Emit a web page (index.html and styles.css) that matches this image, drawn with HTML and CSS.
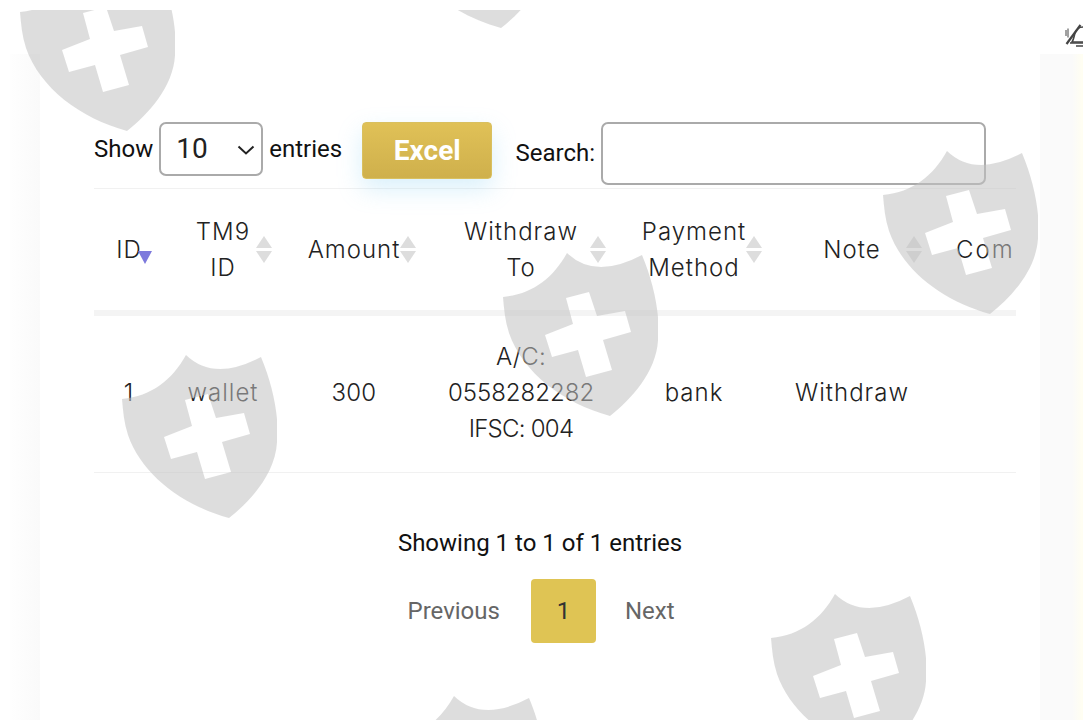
FILE: index.html
```html
<!DOCTYPE html>
<html lang="en">
<head>
<meta charset="utf-8">
<title>Withdraw history</title>
<link rel="stylesheet" href="styles.css">
</head>
<body>
<svg class="defs" width="0" height="0" aria-hidden="true">
  <symbol id="shield" viewBox="0 0 155 163">
    <path fill-rule="evenodd" d="M64 0Q92 27 139 2C150 28 157 60 155 80C157 115 130 145 107 163C60 150 20 120 6 80C2 68 1 56 0 44C30 41 50 25 64 0ZM63 45L86 39L94 63L122 58L128 79L100 87L109 117L83 124L75 97L49 104L42 82L70 71Z"/>
  </symbol>
</svg>
<header class="topbar">
  <svg class="bell" width="30" height="24" viewBox="0 0 30 24" fill="none" stroke="#444" stroke-width="1.6">
    <path d="M2 6v6M4 4.500v9" stroke-width="1"/>
    <path d="M2.500 20L16.500 1" stroke-width="2.200"/>
    <path d="M8 18c2-3 2-6 3-9 1-3 4-6 8-6s7 3 8 6c1 3 1 6 3 9z"/>
    <path d="M6 19h24M12 22h9"/>
  </svg>
</header>
<main class="shell">
  <section class="card">
    <div class="controls">
      <label class="length">Show
        <span class="select-wrap">
          <select class="select"><option>10</option><option>25</option><option>50</option></select>
          <svg class="chevron" width="18" height="10" viewBox="0 0 18 10" fill="none" stroke="#222" stroke-width="2"><path d="M1.500 1.500L9 8.500L16.500 1.500"/></svg>
        </span>
        entries</label>
      <button class="excel" type="button">Excel</button>
      <label class="search"><span class="search-label">Search:</span> <input class="search-input" type="search"></label>
    </div>
    <div class="table-wrap">
      <table class="table">
        <colgroup>
          <col class="c1"><col class="c2"><col class="c3"><col class="c4"><col class="c5"><col class="c6"><col class="c7">
        </colgroup>
        <thead>
          <tr>
            <th class="sorted">ID<span class="sort-down"></span></th>
            <th>TM9<br>ID<span class="sort"></span></th>
            <th>Amount<span class="sort"></span></th>
            <th>Withdraw<br>To<span class="sort"></span></th>
            <th>Payment<br>Method<span class="sort"></span></th>
            <th>Note<span class="sort"></span></th>
            <th class="last">Com</th>
          </tr>
        </thead>
        <tbody>
          <tr>
            <td>1</td>
            <td>wallet</td>
            <td class="tight">300</td>
            <td><span class="tight">A/C:</span><br><span class="digits">0558282282</span><br><span class="ifsc">IFSC: 004</span></td>
            <td>bank</td>
            <td>Withdraw</td>
            <td></td>
          </tr>
        </tbody>
      </table>
    </div>
    <p class="info">Showing 1 to 1 of 1 entries</p>
    <nav class="pager">
      <a class="page-link prev">Previous</a>
      <a class="page-link current">1</a>
      <a class="page-link next">Next</a>
    </nav>
  </section>
</main>
<div class="watermark" aria-hidden="true">
  <svg class="mark m1"><use href="#shield"/></svg>
  <svg class="mark m2"><use href="#shield"/></svg>
  <svg class="mark m3"><use href="#shield"/></svg>
  <svg class="mark m4"><use href="#shield"/></svg>
  <svg class="mark m5"><use href="#shield"/></svg>
  <svg class="mark m6"><use href="#shield"/></svg>
  <svg class="mark m7"><use href="#shield"/></svg>
</div>
</body>
</html>
```

FILE: styles.css
```css
* { box-sizing: border-box; }
html, body { margin: 0; height: 720px; overflow: hidden; }
body {
  position: relative;
  background: #fff;
  color: #111;
  font-family: Roboto, "Liberation Sans", sans-serif;
  font-size: 24px;
}
.defs { position: absolute; }

.topbar {
  height: 54px;
  display: flex;
  justify-content: flex-end;
  padding-top: 24px;
  overflow: hidden;
}
.bell { flex: none; margin-right: -11px; }

.shell {
  height: 666px;
  margin-left: 10px;
  padding: 0 43px 0 30px;
  background: linear-gradient(90deg, #fefefe 0, #fafafa 30px, #fafafa 1062px, #fffef2 1072px);
}
.card {
  width: 1000px;
  height: 100%;
  padding: 68px 54px 0;
  background: #fff;
}

.controls { display: flex; align-items: flex-start; height: 63px; }
.length { display: flex; align-items: center; gap: 6px; height: 54px; }
.select-wrap { position: relative; display: block; }
.select {
  display: block;
  width: 104px;
  height: 54px;
  padding: 0 0 2px 15px;
  border: 2px solid #aaa;
  border-radius: 7px;
  background: #fff;
  color: #222;
  font: 28px Roboto, sans-serif;
  appearance: none;
}
.chevron { position: absolute; right: 8px; top: 23px; }
.excel {
  width: 131px;
  height: 57px;
  margin-left: 20px;
  border: 1px solid #d9c060;
  border-radius: 4px;
  background: linear-gradient(180deg, #e0c157, #cfb04c);
  box-shadow: 0 10px 24px rgba(120, 200, 240, .28);
  color: #fff;
  font: 700 28px Roboto, sans-serif;
}
.search { display: flex; align-items: center; gap: 6px; height: 63px; margin-left: 23px; }
.search-label { margin-bottom: 2px; }
.search-input {
  width: 385px;
  height: 63px;
  border: 2px solid #aaa;
  border-radius: 7px;
  background: #fff;
  appearance: none;
}

.table-wrap {
  width: 922px;
  margin-top: 3px;
  overflow: hidden;
  border-top: 1px solid #f1f1f1;
}
.table {
  width: 1038px;
  table-layout: fixed;
  border-collapse: collapse;
  font-family: Inter, sans-serif;
  font-size: 24px;
  font-weight: 300;
  line-height: 36px;
  letter-spacing: 1px;
  color: #222;
  text-align: center;
}
.c1 { width: 70px; }
.c2 { width: 118px; }
.c3 { width: 144px; }
.c4 { width: 190px; }
.c5 { width: 156px; }
.c6 { width: 160px; }
.c7 { width: 200px; }
th {
  position: relative;
  height: 124px;
  padding: 0;
  border-bottom: 6px solid #f4f4f4;
  font-weight: 300;
}
td { height: 159px; padding: 0 0 2px; border-bottom: 1px solid #f1f1f1; }
th.last { padding-left: 24px; text-align: left; white-space: nowrap; letter-spacing: 2px; }
.tight { letter-spacing: .2px; }
.digits { letter-spacing: 0; }
.ifsc { letter-spacing: -.75px; }

.sort {
  position: absolute;
  right: 10px;
  top: 47px;
  width: 16px;
  height: 27px;
}
.sort::before, .sort::after {
  content: "";
  position: absolute;
  left: 0;
  border-left: 8px solid transparent;
  border-right: 8px solid transparent;
}
.sort::before { top: 0; border-bottom: 12px solid #ddd; }
.sort::after { bottom: 0; border-top: 12px solid #ddd; }
.sort-down {
  position: absolute;
  right: 12px;
  top: 62px;
  border-left: 7px solid transparent;
  border-right: 7px solid transparent;
  border-top: 13px solid #7d79dc;
}

.info { margin: 56px 0 0; line-height: 28px; text-align: center; }
.pager {
  display: flex;
  justify-content: center;
  margin: 22px 0 0 2px;
}
.page-link {
  display: flex;
  align-items: center;
  justify-content: center;
  height: 64px;
  padding: 0 30px;
  color: #666;
}
.page-link.prev { padding-right: 31px; }
.page-link.next { padding-left: 29px; }
.page-link.current {
  width: 65px;
  padding: 0;
  border-radius: 4px;
  background: #dfc454;
  color: #333;
}

.watermark {
  position: absolute;
  left: 0;
  right: 0;
  top: 10px;
  bottom: 0;
  overflow: hidden;
  pointer-events: none;
}
.mark { position: absolute; width: 155px; height: 163px; fill: rgba(193, 193, 193, .55); }
.m1 { left: 20px; top: -42px; }
.m2 { left: 394px; top: -145px; }
.m3 { left: 883px; top: 141px; }
.m4 { left: 503px; top: 243px; }
.m5 { left: 122px; top: 345px; }
.m6 { left: 771px; top: 584px; }
.m7 { left: 390px; top: 686px; }
```
